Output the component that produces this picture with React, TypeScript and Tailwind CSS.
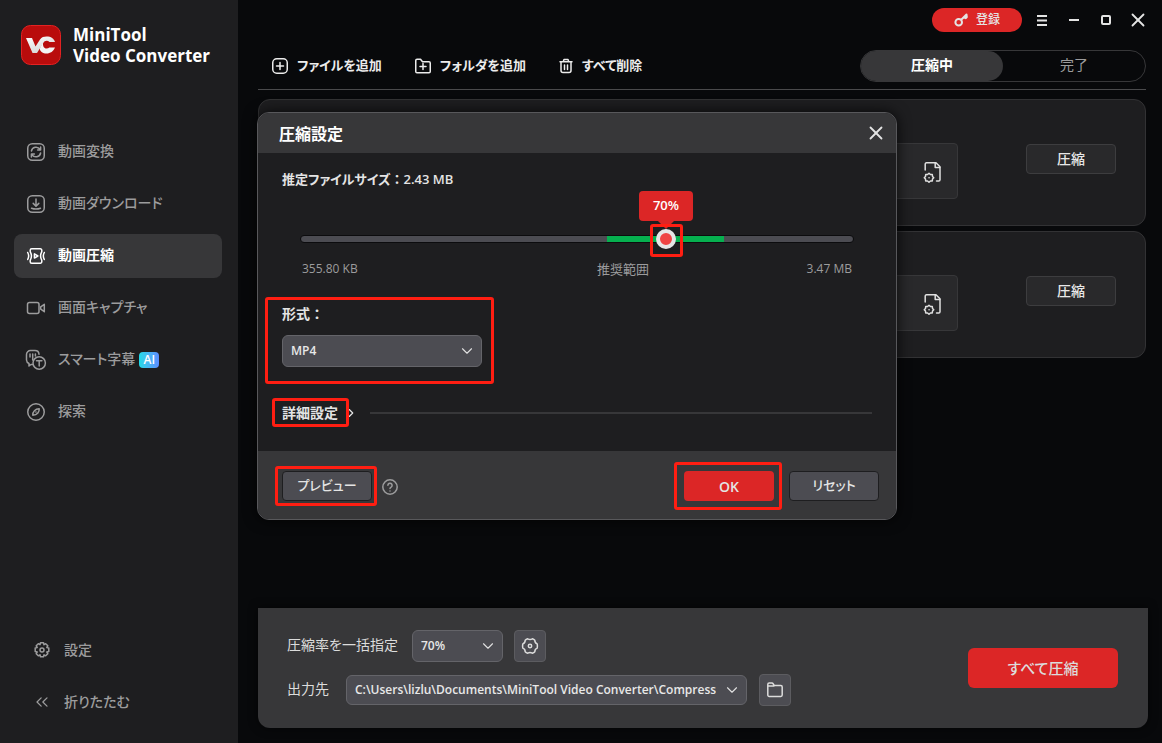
import { useState } from "react";
import type { ReactNode } from "react";
import { ChevronDown, ChevronRight, ChevronsLeft, X } from "lucide-react";

const icon = {
  fill: "none",
  stroke: "currentColor",
  strokeWidth: 1.5,
  strokeLinecap: "round" as const,
  strokeLinejoin: "round" as const,
  "aria-hidden": true,
};

function ConvertIcon() {
  return (
    <svg {...icon} viewBox="0 0 20 20" className="size-5">
      <rect x="1.75" y="1.75" width="16.5" height="16.5" rx="4.5" />
      <path d="M5.4 9a4.7 4.7 0 0 1 8.6-1.6M14.6 11a4.7 4.7 0 0 1-8.6 1.6M14.6 5v3h-3M5.4 15v-3h3" />
    </svg>
  );
}

function DownloadIcon() {
  return (
    <svg {...icon} viewBox="0 0 20 20" className="size-5">
      <rect x="1.75" y="1.75" width="16.5" height="16.5" rx="4.5" />
      <path d="M10 5v7M7.2 9.4 10 12.2l2.8-2.8M5.5 14.2c2.8 1 6.2 1 9 0" />
    </svg>
  );
}

function CompressIcon() {
  return (
    <svg {...icon} viewBox="0 0 20 20" className="size-5">
      <path d="M4.2 5.600V4.300a1.500 1.500 0 0 1 1.500-1.500h8.600a1.500 1.500 0 0 1 1.500 1.500v1.300c-1.600 2.900-1.600 5.900 0 8.800v1.300a1.500 1.500 0 0 1-1.500 1.500H5.700a1.500 1.500 0 0 1-1.500-1.500v-1.300c1.600-2.900 1.600-5.900 0-8.800z" />
      <path d="M1.700 6.500c1.200 2.200 1.200 4.800 0 7M18.300 6.500c-1.200 2.200-1.200 4.800 0 7" />
      <path d="M8.400 7.900v4.200l3.500-2.100z" />
    </svg>
  );
}

function CaptureIcon() {
  return (
    <svg {...icon} viewBox="0 0 20 20" className="size-5">
      <rect x="1.5" y="4.5" width="11.5" height="11" rx="2" />
      <path d="m18.300 6.300-3.600 2.600v2.200l3.600 2.600z" />
    </svg>
  );
}

function SubtitleIcon() {
  return (
    <svg {...icon} viewBox="0 0 20 20" className="size-5 overflow-visible">
      <path d="M6.500 14.500H5L3 16v-2.500A4 4 0 0 1 .5 10V4.500a4 4 0 0 1 4-4H9a4 4 0 0 1 4 3.700" />
      <path d="M4 4v3M6.700 4v6M9.400 4v2" />
      <circle cx="13.2" cy="13" r="6.2" />
      <path d="M10.500 10.700h5.400M13.200 10.700v5.300" />
    </svg>
  );
}

function ExploreIcon() {
  return (
    <svg {...icon} viewBox="0 0 20 20" className="size-5">
      <circle cx="10" cy="10" r="8.25" />
      <path d="M13.200 6.800c.2 2.800-1.600 6.400-6.400 6.400-.2-3.600 2.400-6.200 6.400-6.400z" />
      <path d="M9.900 10.100h.1" />
    </svg>
  );
}

function SettingsIcon() {
  return (
    <svg {...icon} viewBox="0 0 18 18" className="size-[18px]">
      <path d="M7.500 1.800h3l.5 1.900 1.700-1 2.100 2.100-1 1.700 2 .5v3.500l-2 .5 1 1.700-2.100 2.100-1.700-1-.5 2h-3l-.5-2-1.700 1-2.100-2.100 1-1.700-2-.5V7l2-.5-1-1.700 2.100-2.100 1.700 1z" />
      <circle cx="9" cy="9" r="2" />
    </svg>
  );
}

function FlowerGearIcon() {
  return (
    <svg {...icon} viewBox="0 0 18 18" className="size-[18px]">
      <path d="M6.700 1.800c1.500.8 3.100.8 4.600 0 1 .3 1.900.8 2.500 1.500 0 1.700.8 3 2.400 3.600.3 1.400.3 2.800 0 4.200-1.600.6-2.400 1.900-2.400 3.600-.6.7-1.500 1.200-2.500 1.500-1.500-.8-3.100-.8-4.600 0-1-.3-1.900-.8-2.500-1.500 0-1.700-.8-3-2.400-3.600a9 9 0 0 1 0-4.200c1.600-.6 2.400-1.900 2.400-3.600.6-.7 1.500-1.200 2.500-1.500z" />
      <circle cx="9" cy="9" r="1.7" />
    </svg>
  );
}

function AddFileIcon() {
  return (
    <svg {...icon} viewBox="0 0 18 18" className="size-[18px]">
      <rect x="1.75" y="1.75" width="14.5" height="14.5" rx="4" />
      <path d="M9 5.500v7M5.500 9h7" />
    </svg>
  );
}

function AddFolderIcon() {
  return (
    <svg {...icon} viewBox="0 0 18 18" className="size-[18px]">
      <path d="M1.750 3.500c0-.8.6-1.250 1.250-1.250h3.500l2 2.500H15c.7 0 1.250.5 1.250 1.250v8.500c0 .7-.5 1.250-1.250 1.250H3c-.7 0-1.250-.5-1.250-1.250z" />
      <path d="M9 6.500v6M6 9.500h6" />
    </svg>
  );
}

function TrashIcon() {
  return (
    <svg {...icon} viewBox="0 0 16 18" className="h-[18px] w-4">
      <path d="M2 4.800h12M5.300 4.500l.7-2h4l.7 2M3 5v8.500a2 2 0 0 0 2 2h6a2 2 0 0 0 2-2V5M6.500 8v4.500M9.500 8v4.500" />
    </svg>
  );
}

function KeyIcon() {
  return (
    <svg {...icon} strokeWidth={2} viewBox="0 0 14 14" className="size-[14px]">
      <circle cx="4.7" cy="9.3" r="3.3" />
      <path d="M7.200 6.800 12.500 1.500M10 4l1.800 1.200 1-1.200-.3-2.300" />
    </svg>
  );
}

function FileGearIcon() {
  return (
    <svg {...icon} viewBox="0 0 20 22" className="h-[22px] w-5">
      <path d="M2.200 9V3.200c0-.8.5-1.400 1.300-1.400H13l4 4v12.900c0 .8-.5 1.300-1.300 1.300H13.500" />
      <path d="M12.200 2v4.600h4.600" />
      <path d="m6 12.200 1.400 1.300h1.900l.2 1.900 1.200 1.400-1.200 1.300-.2 1.900H7.400L6 21.200 4.600 20H2.700l-.2-1.900-1.200-1.300 1.200-1.400.2-1.900h1.900z" />
      <path d="M6 16.700h.1" />
    </svg>
  );
}

function FolderIcon() {
  return (
    <svg {...icon} viewBox="0 0 18 18" className="size-[18px]">
      <path d="M1.800 14V3.500c0-.8.600-1.400 1.400-1.400h2.700c.6 0 1 .2 1.300.7l1 1.700h6.600c.8 0 1.400.6 1.400 1.400V14c0 .8-.6 1.400-1.400 1.400H3.200c-.8 0-1.400-.6-1.400-1.400zM2 5h6" />
    </svg>
  );
}

function Logo() {
  return (
    <svg viewBox="0 0 40 40" className="size-10 shrink-0" aria-hidden="true">
      <defs>
        <linearGradient id="ribbon" x1="0" y1="0" x2="0.6" y2="1">
          <stop offset="0" stopColor="#ffffff" />
          <stop offset="1" stopColor="#d4d4d4" />
        </linearGradient>
      </defs>
      <rect x="0.5" y="0.5" width="39" height="39" rx="9" fill="#b90c0c" stroke="#e32222" />
      <path d="M5 13h6l3.500 8.500L19 14.500c1.700-2.400 3.800-3 6.500-3 4.500 0 7.500 2 8.500 5.500h-5.500c-2-2.200-5-1.500-6.200 1L16 28h-4.500z" fill="url(#ribbon)" />
      <path d="M34 22.500c-1.500 3.800-4.600 6-8.500 6-3.700 0-6.300-1.800-6.800-5l3.300-6c-.3 3.700 1 6 3.500 6 1.200 0 2.100-.4 2.800-1z" fill="#f3f3f3" />
    </svg>
  );
}

const navItems = [
  { label: "動画変換", icon: <ConvertIcon /> },
  { label: "動画ダウンロード", icon: <DownloadIcon /> },
  { label: "動画圧縮", icon: <CompressIcon />, active: true },
  { label: "画面キャプチャ", icon: <CaptureIcon /> },
  { label: "スマート字幕", icon: <SubtitleIcon />, badge: "AI" },
  { label: "探索", icon: <ExploreIcon /> },
];

function Sidebar() {
  return (
    <aside className="flex w-[238px] shrink-0 flex-col bg-[#1e1e20] pb-[19px] pl-[14px] pr-4 pt-6 text-[#9c9c9d]">
      <div className="flex items-center gap-3 pl-[7px]">
        <Logo />
        <h1 className="text-[17px] font-bold leading-[21px] text-white">
          MiniTool
          <br />
          Video Converter
        </h1>
      </div>

      <nav className="mt-16 flex flex-col gap-2">
        {navItems.map((item) => (
          <a
            key={item.label}
            href="#"
            aria-current={item.active ? "page" : undefined}
            className={`flex h-11 items-center rounded-lg pl-3 text-[14px] ${
              item.active ? "bg-[#373739] font-bold text-white" : "font-medium"
            }`}
          >
            {item.icon}
            <span className="ml-3 pb-[3px]">{item.label}</span>
            {item.badge && (
              <span className="ml-1 flex h-4 w-5 items-center justify-center rounded bg-linear-to-r from-[#1edbe8] to-[#5a8cff] text-[12px] font-semibold text-white">
                {item.badge}
              </span>
            )}
          </a>
        ))}
      </nav>

      <div className="mt-auto flex flex-col gap-2 pl-[19px] text-[14px] font-medium">
        <button type="button" className="flex h-11 items-center gap-[13px]">
          <SettingsIcon />
          <span className="pb-px">設定</span>
        </button>
        <button type="button" className="flex h-11 items-center gap-[13px]">
          <ChevronsLeft size={20} strokeWidth={1.5} className="-mx-px" />
          <span className="pb-px">折りたたむ</span>
        </button>
      </div>
    </aside>
  );
}

function TitleBar() {
  return (
    <div className="flex items-center justify-end pt-2 text-[#e4e4e4]">
      <button
        type="button"
        className="mr-1 flex h-6 w-[90px] items-center justify-center gap-2 rounded-full bg-[#dc2626] text-[12px] font-medium"
      >
        <KeyIcon />
        登録
      </button>
      <button type="button" aria-label="メニュー" className="flex h-6 w-8 items-center justify-center">
        <svg viewBox="0 0 12 12" className="size-3" stroke="currentColor" strokeWidth="2" aria-hidden="true">
          <path d="M1 2h10M1 6.500h10M1 11h10" />
        </svg>
      </button>
      <button type="button" aria-label="最小化" className="flex h-6 w-8 items-center justify-center">
        <span className="h-[2px] w-[10px] bg-current" />
      </button>
      <button type="button" aria-label="最大化" className="flex h-6 w-8 items-center justify-center">
        <span className="size-[10px] rounded-[2px] border-2 border-current" />
      </button>
      <button type="button" aria-label="閉じる" className="-mr-2 flex h-6 w-8 items-center justify-center">
        <X size={22} strokeWidth={2} />
      </button>
    </div>
  );
}

function Toolbar() {
  return (
    <div className="mt-[18px] flex items-center border-b border-[#4a4a4c] pb-[7px] text-[13px]">
      <div className="flex gap-8 pl-[13px] font-semibold text-[#ececec]">
        <button type="button" className="flex items-center gap-2">
          <AddFileIcon />
          ファイルを追加
        </button>
        <button type="button" className="flex items-center gap-2">
          <AddFolderIcon />
          フォルダを追加
        </button>
        <button type="button" className="flex items-center gap-2">
          <TrashIcon />
          すべて削除
        </button>
      </div>
      <div className="ml-auto flex h-8 w-[286px] rounded-full border border-[#373739] text-[14px]">
        <button type="button" className="flex-1 rounded-full bg-[#373739] pb-[3px] font-semibold text-white">
          圧縮中
        </button>
        <button type="button" className="flex-1 pb-[3px] text-[#9c9c9d]">
          完了
        </button>
      </div>
    </div>
  );
}

function FileCard() {
  return (
    <article className="flex h-[127px] items-start justify-end rounded-xl border border-[#323234] bg-[#1e1e20] pr-[29px] pt-[43px]">
      <div className="flex h-14 w-60 items-center justify-end rounded border border-[#373739] bg-[#29292b] pr-[14px] pt-[2px] text-[#e0e0e0]">
        <FileGearIcon />
      </div>
      <button
        type="button"
        className="ml-[68px] mt-px h-[30px] w-[90px] rounded border border-[#3d3d3f] bg-[#29292b] pb-px text-[14px] font-medium text-[#e8e8e8]"
      >
        圧縮
      </button>
    </article>
  );
}

// Red frame that points out the element it is placed in
function Marker({ className }: { className: string }) {
  return <span className={`pointer-events-none absolute z-10 rounded-[3px] border-3 border-[#ff1e12] ${className}`} />;
}

type DropdownProps = {
  id: string;
  value: string;
  className: string;
};

function Dropdown({ id, value, className }: DropdownProps) {
  return (
    <div className={`relative ${className}`}>
      <select
        id={id}
        className="size-full appearance-none rounded-md border border-[#646469] bg-[#4c4c52] pl-2 pr-[30px] text-[12px] font-semibold text-[#e8e8e8]"
      >
        <option>{value}</option>
      </select>
      <ChevronDown
        size={18}
        strokeWidth={1.5}
        className="pointer-events-none absolute inset-y-0 right-[6px] my-auto text-[#e0e0e0]"
      />
    </div>
  );
}

function GreyButton({ children }: { children: ReactNode }) {
  return (
    <button
      type="button"
      className="h-[30px] w-[90px] rounded border border-[#1e1e20] bg-[#4c4c52] pb-px text-[13px] font-medium text-[#e4e4e4]"
    >
      {children}
    </button>
  );
}

const MIN_RATE = 10;
const MAX_RATE = 100;

function RateSlider() {
  const [rate, setRate] = useState(70);
  const ratio = (rate - MIN_RATE) / (MAX_RATE - MIN_RATE);

  return (
    <div className="ml-[18px] mr-[18px] mt-10">
      <div className="relative h-5">
        <input
          id="rate"
          type="range"
          min={MIN_RATE}
          max={MAX_RATE}
          value={rate}
          onChange={(e) => setRate(Number(e.target.value))}
          className="absolute inset-x-0 top-[6px] h-2 w-full appearance-none rounded-full border border-[#0c0c0e] bg-[linear-gradient(to_right,#4c4c52_55.4%,#06b04f_55.4%,#06b04f_76.7%,#4c4c52_76.7%)] [&::-webkit-slider-thumb]:size-5 [&::-webkit-slider-thumb]:appearance-none [&::-webkit-slider-thumb]:rounded-full [&::-webkit-slider-thumb]:border-4 [&::-webkit-slider-thumb]:border-[#e6e6e6] [&::-webkit-slider-thumb]:bg-[#ef4444]"
        />
        <div
          className="pointer-events-none absolute inset-y-0 w-0"
          style={{ left: `calc(10px + (100% - 20px) * ${ratio})` }}
        >
          <output
            htmlFor="rate"
            className="absolute -left-[27px] -top-[38px] flex h-[30px] w-[54px] items-center justify-center rounded bg-[#dc2626] text-[13px] font-semibold text-white"
          >
            {rate}%
          </output>
          <span className="absolute -left-2 -top-2 border-x-8 border-t-8 border-x-transparent border-t-[#dc2626]" />
          <Marker className="-left-4 -top-[5px] h-[33px] w-[33px]" />
        </div>
      </div>
      <div className="mt-[10px] flex justify-between px-[2px] text-[12px] leading-5 text-[#9c9c9d]">
        <span className="flex-1">355.80 KB</span>
        <label htmlFor="rate" className="ml-[92px] text-[13px]">
          推奨範囲
        </label>
        <span className="flex-1 text-right">3.47 MB</span>
      </div>
    </div>
  );
}

function CompressDialog() {
  return (
    <section
      role="dialog"
      aria-labelledby="dialog-title"
      className="absolute left-[19px] top-28 w-[640px] rounded-xl border border-[#58585b] bg-[#1e1e20] text-[14px] text-[#e4e4e4] shadow-[0_0_14px_rgba(0,0,0,0.8)]"
    >
      <header className="flex h-10 items-center justify-between rounded-t-[11px] bg-[#373739] pl-[21px] pr-[9px]">
        <h2 id="dialog-title" className="pt-px text-[16px] font-bold text-white">
          圧縮設定
        </h2>
        <button type="button" aria-label="閉じる">
          <X size={22} strokeWidth={2} />
        </button>
      </header>

      <div className="px-6 pb-[27px] pt-4">
        <p className="text-[13px] font-semibold leading-5">
          推定ファイルサイズ
          <span className="[font-feature-settings:normal]">：</span>
          2.43 MB
        </p>

        <RateSlider />

        <div className="relative mt-[25px] w-[200px]">
          <Marker className="-bottom-[17px] -left-[17px] -right-3 -top-[7px]" />
          <label htmlFor="format" className="block font-semibold leading-5 [font-feature-settings:normal]">
            形式：
          </label>
          <Dropdown id="format" value="MP4" className="mt-[11px] h-8" />
        </div>

        <div className="mt-[35px] flex items-center">
          <button type="button" className="relative flex h-[22px] items-center font-semibold">
            <Marker className="-bottom-[3px] -left-[10px] -top-1 right-[9px]" />
            <span className="pb-px">詳細設定</span>
            <ChevronRight size={14} strokeWidth={2} className="ml-[6px]" />
          </button>
          <hr className="ml-3 flex-1 border-t-2 border-[#373739]" />
        </div>
      </div>

      <footer className="flex h-[68px] items-center rounded-b-[11px] bg-[#373739] pl-6 pr-[17px] pt-[2px]">
        <div className="relative flex">
          <Marker className="-inset-y-[5px] -left-[7px] -right-[5px]" />
          <GreyButton>プレビュー</GreyButton>
        </div>
        <button type="button" aria-label="ヘルプ" className="ml-[10px] pt-[2px] text-[#9c9c9d]">
          <svg {...icon} viewBox="0 0 16 16" className="size-4">
            <circle cx="8" cy="8" r="7.2" />
            <path d="M5.900 6.300a2.100 2.100 0 1 1 3.200 1.800c-.7.400-1.100.8-1.100 1.500M8 11.900v.1" />
          </svg>
        </button>
        <div className="ml-auto flex gap-[15px]">
          <div className="relative flex">
            <Marker className="-inset-y-[9px] -left-[10px] -right-2" />
            <button type="button" className="h-[30px] w-[90px] rounded bg-[#dc2626] font-semibold">
              OK
            </button>
          </div>
          <GreyButton>リセット</GreyButton>
        </div>
      </footer>
    </section>
  );
}

function OutputBar() {
  return (
    <footer className="-mr-[2px] mb-[15px] mt-auto flex h-[120px] items-center justify-between rounded-b-xl bg-[#373739] pl-[29px] pr-[30px] text-[14px] text-[#dcdcdc] shadow-[0_0_10px_rgba(0,0,0,0.6)]">
      <div className="flex flex-col gap-3">
        <div className="flex items-center">
          <label htmlFor="batch-rate" className="pb-[3px]">
            圧縮率を一括指定
          </label>
          <Dropdown id="batch-rate" value="70%" className="ml-[14px] h-8 w-[91px]" />
          <button
            type="button"
            aria-label="圧縮の設定"
            className="ml-[11px] flex size-8 items-center justify-center rounded border border-[#5c5c60] bg-[#4c4c52]"
          >
            <FlowerGearIcon />
          </button>
        </div>
        <div className="flex items-center">
          <label htmlFor="output" className="pb-[3px]">
            出力先
          </label>
          <Dropdown
            id="output"
            value="C:\Users\lizlu\Documents\MiniTool Video Converter\Compressed"
            className="ml-[17px] h-[30px] w-[401px]"
          />
          <button
            type="button"
            aria-label="フォルダを開く"
            className="ml-3 flex size-8 items-center justify-center rounded border border-[#5c5c60] bg-[#4c4c52]"
          >
            <FolderIcon />
          </button>
        </div>
      </div>
      <button type="button" className="h-10 w-[150px] rounded-md bg-[#dc2626] text-[15px] font-medium">
        すべて圧縮
      </button>
    </footer>
  );
}

export default function App() {
  return (
    <div
      lang="ja"
      className="flex min-h-screen bg-[#08090b] font-['Open_Sans','Noto_Sans_CJK_JP',sans-serif] [font-feature-settings:'palt']"
    >
      <Sidebar />
      <main className="relative flex min-w-0 flex-1 flex-col pl-5 pr-4">
        <TitleBar />
        <Toolbar />
        <div className="mt-[9px] flex flex-col gap-[5px]">
          <FileCard />
          <FileCard />
        </div>
        <OutputBar />
        <CompressDialog />
      </main>
    </div>
  );
}
